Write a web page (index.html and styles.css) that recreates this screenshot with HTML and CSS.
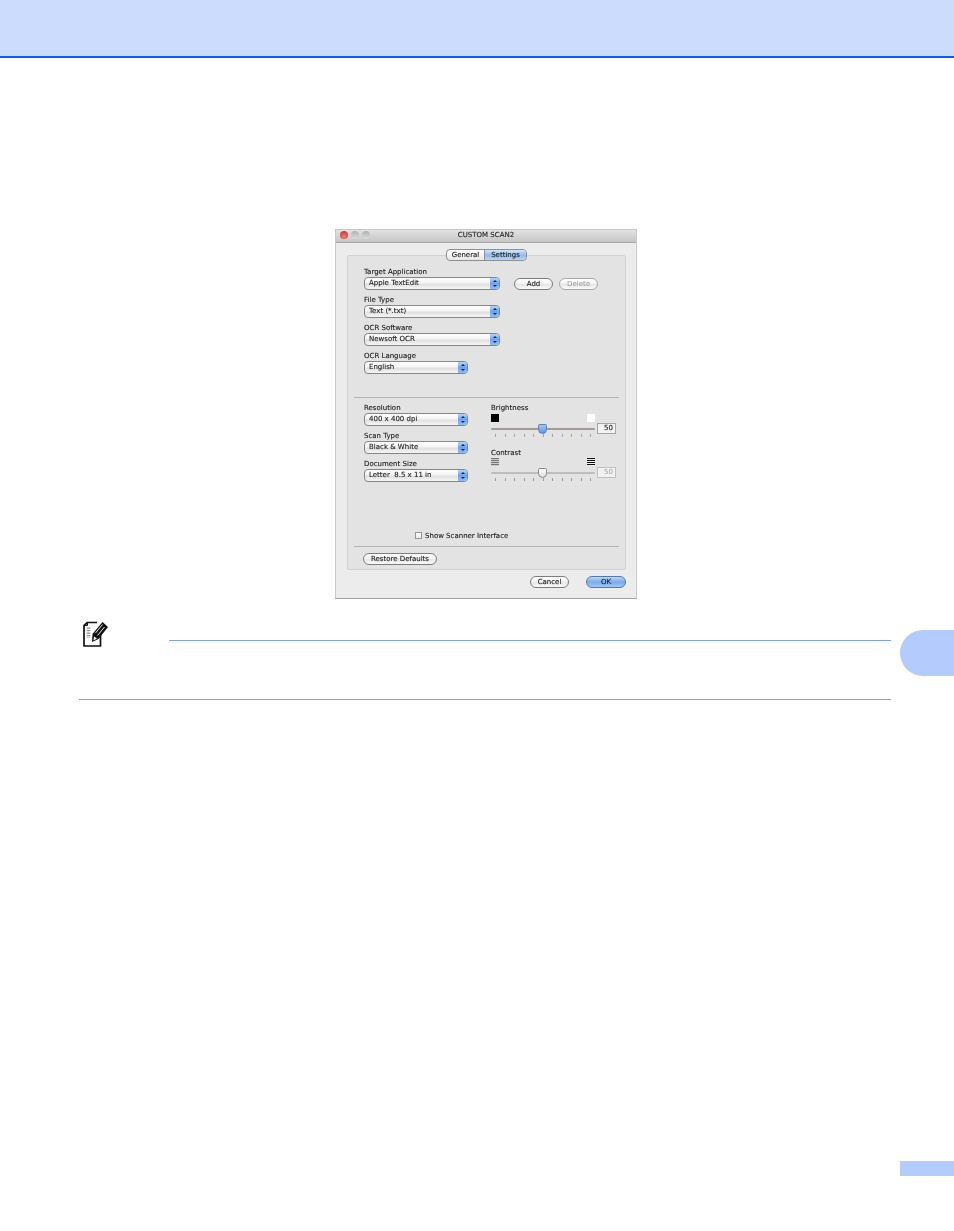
FILE: index.html
```html
<!DOCTYPE html>
<html lang="en">
<head>
    <meta charset="UTF-8">
    <meta name="viewport" content="width=device-width, initial-scale=1.0">
    <title>Custom Scan</title>
    <link rel="stylesheet" href="styles.css">
</head>
<body>
    <header class="page-header"></header>

    <main class="page-body">
        <div class="dialog">
            <div class="title-bar">
                <div class="lights">
                    <span class="light light-red"></span>
                    <span class="light"></span>
                    <span class="light"></span>
                </div>
                <div class="title">CUSTOM SCAN2</div>
            </div>
            <div class="dialog-body">
                <div class="tabs">
                    <div class="tab">General</div>
                    <div class="tab tab-active">Settings</div>
                </div>
                <div class="group">
                    <section class="apps">
                        <div class="field-label">Target Application</div>
                        <div class="popup-row">
                            <div class="popup popup-wide"><span>Apple TextEdit</span><i class="arrows"></i></div>
                            <button class="btn btn-add">Add</button>
                            <button class="btn btn-delete" disabled>Delete</button>
                        </div>
                        <div class="field-label">File Type</div>
                        <div class="popup popup-wide"><span>Text (*.txt)</span><i class="arrows"></i></div>
                        <div class="field-label">OCR Software</div>
                        <div class="popup popup-wide"><span>Newsoft OCR</span><i class="arrows"></i></div>
                        <div class="field-label">OCR Language</div>
                        <div class="popup popup-short"><span>English</span><i class="arrows"></i></div>
                    </section>

                    <hr class="divider">

                    <section class="scan-grid">
                        <div class="scan-left">
                            <div class="field-label">Resolution</div>
                            <div class="popup popup-short"><span>400 x 400 dpi</span><i class="arrows"></i></div>
                            <div class="field-label">Scan Type</div>
                            <div class="popup popup-short"><span>Black &amp; White</span><i class="arrows"></i></div>
                            <div class="field-label">Document Size</div>
                            <div class="popup popup-short"><span>Letter&nbsp; 8.5 x 11 in</span><i class="arrows"></i></div>
                        </div>
                        <div class="scan-right">
                            <div class="field-label">Brightness</div>
                            <div class="swatches">
                                <span class="swatch swatch-black"></span>
                                <span class="swatch swatch-white"></span>
                            </div>
                            <div class="slider-row">
                                <div class="slider">
                                    <div class="track track-on"></div>
                                    <span class="thumb thumb-blue"></span>
                                    <div class="ticks"><i></i><i></i><i></i><i></i><i></i><i></i><i></i><i></i><i></i><i></i><i></i></div>
                                </div>
                                <div class="value">50</div>
                            </div>
                            <div class="field-label label-contrast">Contrast</div>
                            <div class="swatches">
                                <span class="stripes stripes-light"></span>
                                <span class="stripes stripes-dark"></span>
                            </div>
                            <div class="slider-row">
                                <div class="slider">
                                    <div class="track"></div>
                                    <span class="thumb"></span>
                                    <div class="ticks"><i></i><i></i><i></i><i></i><i></i><i></i><i></i><i></i><i></i><i></i><i></i></div>
                                </div>
                                <div class="value value-off">50</div>
                            </div>
                        </div>
                    </section>

                    <label class="check-row"><span class="checkbox"></span>Show Scanner Interface</label>

                    <hr class="divider">

                    <button class="btn btn-restore">Restore Defaults</button>
                </div>
                <div class="dialog-actions">
                    <button class="btn btn-cancel">Cancel</button>
                    <button class="btn btn-ok">OK</button>
                </div>
            </div>
        </div>

        <div class="note">
            <div class="note-head">
                <svg class="note-icon" width="25" height="26" viewBox="0 0 25 26">
                    <path d="M14 1.500H4.500L1 4.500V25H17.500V12" fill="#fff" stroke="#111" stroke-width="1.700" stroke-linejoin="round"/>
                    <path d="M1 4.500H4.500V1.500Z" fill="#666" stroke="#111"/>
                    <path d="M5.500 6.500V17" fill="none" stroke="#8c8c8c" stroke-width="3.500" stroke-dasharray="1.300 1.200"/>
                    <path d="M9 21 9.500 13 19.500 1 25 6 15.500 18Z" fill="#111"/>
                    <path d="M12.500 12 19.500 3.500M14.500 14.500 21.500 6" stroke="#e8e8e8" stroke-width="1"/>
                    <path d="M10.500 19.500 11 15.500 14 17.500Z" fill="#fff"/>
                </svg>
                <div class="note-line"></div>
            </div>
            <div class="note-text"></div>
        </div>

        <div class="chapter-tab"></div>
    </main>

    <footer class="page-footer"><div class="page-number"></div></footer>
</body>
</html>
```

FILE: styles.css
```css
* {
    box-sizing: border-box;
}
html, body {
    height: 1231px;
    margin: 0;
    overflow: hidden;
}
body {
    display: flex;
    flex-direction: column;
    background-color: #ffffff;
    font-family: "DejaVu Sans", sans-serif;
}
.page-header {
    height: 58px;
    flex: none;
    background-color: #ccdcfd;
    border-bottom: 2px solid #0a5cf5;
}
.page-body {
    flex: 1;
    position: relative;
    padding-top: 171px;
}
.page-footer {
    flex: none;
    height: 70px;
    display: flex;
    justify-content: flex-end;
}
.page-number {
    width: 54px;
    height: 15px;
    background-color: #b3cbfd;
}

/* dialog */
.dialog {
    width: 302px;
    height: 370px;
    margin-left: 335px;
    background-color: #ececec;
    border: 1px solid #c8c8c8;
    border-bottom-color: #a0a0a0;
    color: #222222;
    font-size: 7px;
    text-rendering: geometricPrecision;
    -webkit-text-stroke: 0.12px #222222;
    filter: blur(0.4px);
}
.title-bar {
    height: 13px;
    padding-bottom: 2px;
    display: flex;
    align-items: center;
    position: relative;
    background: linear-gradient(#e2e2e2, #c6c6c6);
    border-bottom: 1px solid #a8a8a8;
}
.lights {
    display: flex;
    gap: 3px;
    padding-left: 4px;
}
.light {
    width: 8px;
    height: 8px;
    border-radius: 50%;
    background: linear-gradient(#b2b2b2, #dcdcdc);
}
.light-red {
    background: radial-gradient(circle at 50% 70%, #f07a74, #c42a2c);
}
.title {
    position: absolute;
    left: 0;
    right: 0;
    text-align: center;
}
.dialog-body {
    padding: 6px 10px 0 11px;
}
.tabs {
    display: flex;
    width: 81px;
    height: 12px;
    margin: 0 0 -6px 99px;
    position: relative;
    border: 1px solid #8f8f8f;
    border-radius: 4px;
    background: linear-gradient(#ffffff, #e8e8e8);
}
.tab {
    flex: 1;
    text-align: center;
    line-height: 10px;
}
.tab-active {
    flex: none;
    width: 42px;
    border-left: 1px solid #8f8f8f;
    border-radius: 0 3px 3px 0;
    background: linear-gradient(#d4e6fa, #94bcf0 50%, #b4d4f8);
}
.group {
    height: 315px;
    padding-top: 10px;
    background-color: #e3e3e3;
    border: 1px solid #d2d2d2;
    border-radius: 2px;
}
.apps {
    height: 131px;
    padding-left: 16px;
}
.field-label {
    height: 10px;
    line-height: 12px;
    margin-bottom: 1px;
}
.popup-row {
    display: flex;
    align-items: center;
    margin-bottom: 4px;
}
.popup {
    height: 13px;
    display: flex;
    justify-content: space-between;
    margin-bottom: 4px;
    border: 1px solid #858585;
    border-radius: 4px;
    background: linear-gradient(#ffffff, #f4f4f4 45%, #e0e0e0 55%, #f6f6f6);
    line-height: 11px;
    overflow: hidden;
}
.popup-row .popup {
    margin-bottom: 0;
}
.popup span {
    padding-left: 4px;
}
.popup-wide {
    width: 136px;
}
.popup-short {
    width: 104px;
}
.arrows {
    width: 9px;
    flex: none;
    position: relative;
    background: linear-gradient(#b8d4f6, #6ea2ea 50%, #94bef2);
}
.arrows::before, .arrows::after {
    content: "";
    position: absolute;
    left: 2.5px;
    border-left: 2px solid transparent;
    border-right: 2px solid transparent;
}
.arrows::before {
    top: 2px;
    border-bottom: 2.500px solid #14233c;
}
.arrows::after {
    bottom: 2px;
    border-top: 2.500px solid #14233c;
}
.btn {
    display: block;
    height: 12px;
    padding: 0;
    border: 1px solid #7c7c7c;
    border-radius: 7px;
    background: linear-gradient(#ffffff, #f2f2f2 50%, #e6e6e6 55%, #fafafa);
    color: #222222;
    font-family: "DejaVu Sans", sans-serif;
    font-size: 7px;
    line-height: 10px;
}
.btn-add {
    width: 39px;
    margin-left: 14px;
}
.btn-delete {
    width: 39px;
    margin-left: 6px;
    border-color: #a8a8a8;
    color: #9a9a9a;
    -webkit-text-stroke: 0;
}
.divider {
    height: 1px;
    margin: 0 6px;
    border: 0;
    background-color: #b4b4b4;
}
.scan-grid {
    display: flex;
    height: 130px;
    padding: 4px 0 0 16px;
}
.scan-left {
    width: 127px;
}
.scan-right {
    width: 126px;
}
.swatches {
    display: flex;
    justify-content: space-between;
    width: 104px;
    height: 8px;
    margin-top: 2px;
}
.swatch {
    width: 8px;
    height: 8px;
}
.swatch-black {
    background-color: #000000;
}
.swatch-white {
    background-color: #ffffff;
}
.stripes {
    width: 8px;
    height: 8px;
}
.stripes-light {
    background: repeating-linear-gradient(#777 0 1px, #ccc 1px 2px);
}
.stripes-dark {
    background: repeating-linear-gradient(#111 0 1px, #eee 1px 2px);
}
.slider-row {
    display: flex;
    gap: 2px;
    margin-top: 1px;
}
.slider {
    width: 104px;
    height: 18px;
    position: relative;
    padding-top: 5px;
}
.track {
    height: 2px;
    border-radius: 1px;
    background-color: #bdbdbd;
}
.track-on {
    background-color: #a49a9a;
}
.thumb {
    position: absolute;
    left: 47px;
    top: 1px;
    width: 9px;
    height: 10px;
    border: 1px solid #8a8a8a;
    border-radius: 2px 2px 5px 5px;
    background: linear-gradient(#ffffff, #dedede);
}
.thumb-blue {
    border-color: #5a7eb0;
    background: linear-gradient(#a4c6f2, #5e96e4);
}
.ticks {
    display: flex;
    justify-content: space-between;
    margin-top: 4px;
    padding: 0 4px;
}
.ticks i {
    width: 1px;
    height: 3px;
    background-color: #a0a0a0;
}
.value {
    width: 19px;
    height: 11px;
    padding-right: 2px;
    background-color: #f2f2f2;
    border: 1px solid #a6a6a6;
    text-align: right;
    line-height: 9px;
}
.value-off {
    border-color: #c0c0c0;
    color: #a0a0a0;
    -webkit-text-stroke: 0;
}
.label-contrast {
    height: 9px;
    margin-top: 6px;
}
.check-row {
    display: flex;
    align-items: center;
    gap: 3px;
    height: 9px;
    margin: 3px 0 6px 67px;
}
.checkbox {
    width: 7px;
    height: 7px;
    border: 1px solid #959595;
    background: linear-gradient(#ffffff, #e8e8e8);
}
.btn-restore {
    width: 74px;
    margin: 6px 0 0 15px;
}
.dialog-actions {
    display: flex;
    justify-content: flex-end;
    gap: 17px;
    margin-top: 6px;
}
.btn-cancel {
    width: 39px;
}
.btn-ok {
    width: 40px;
    border-color: #5678a8;
    background: linear-gradient(#bcd6f8, #78acec 50%, #a0c8f6);
}

/* note */
.note {
    width: 812px;
    margin: 22px 0 0 79px;
    border-bottom: 1px solid #7ba2f5;
}
.note-head {
    display: flex;
    align-items: flex-end;
}
.note-icon {
    flex: none;
    display: block;
    margin-left: 4px;
}
.note-line {
    flex: 1;
    height: 1px;
    margin-left: 61px;
    margin-bottom: 6px;
    background-color: #7ba2f5;
}
.note-text {
    height: 52px;
}
.chapter-tab {
    position: absolute;
    right: 0;
    top: 572px;
    width: 54px;
    height: 46px;
    border-radius: 23px 0 0 23px;
    background-color: #b3cbfd;
}
```
